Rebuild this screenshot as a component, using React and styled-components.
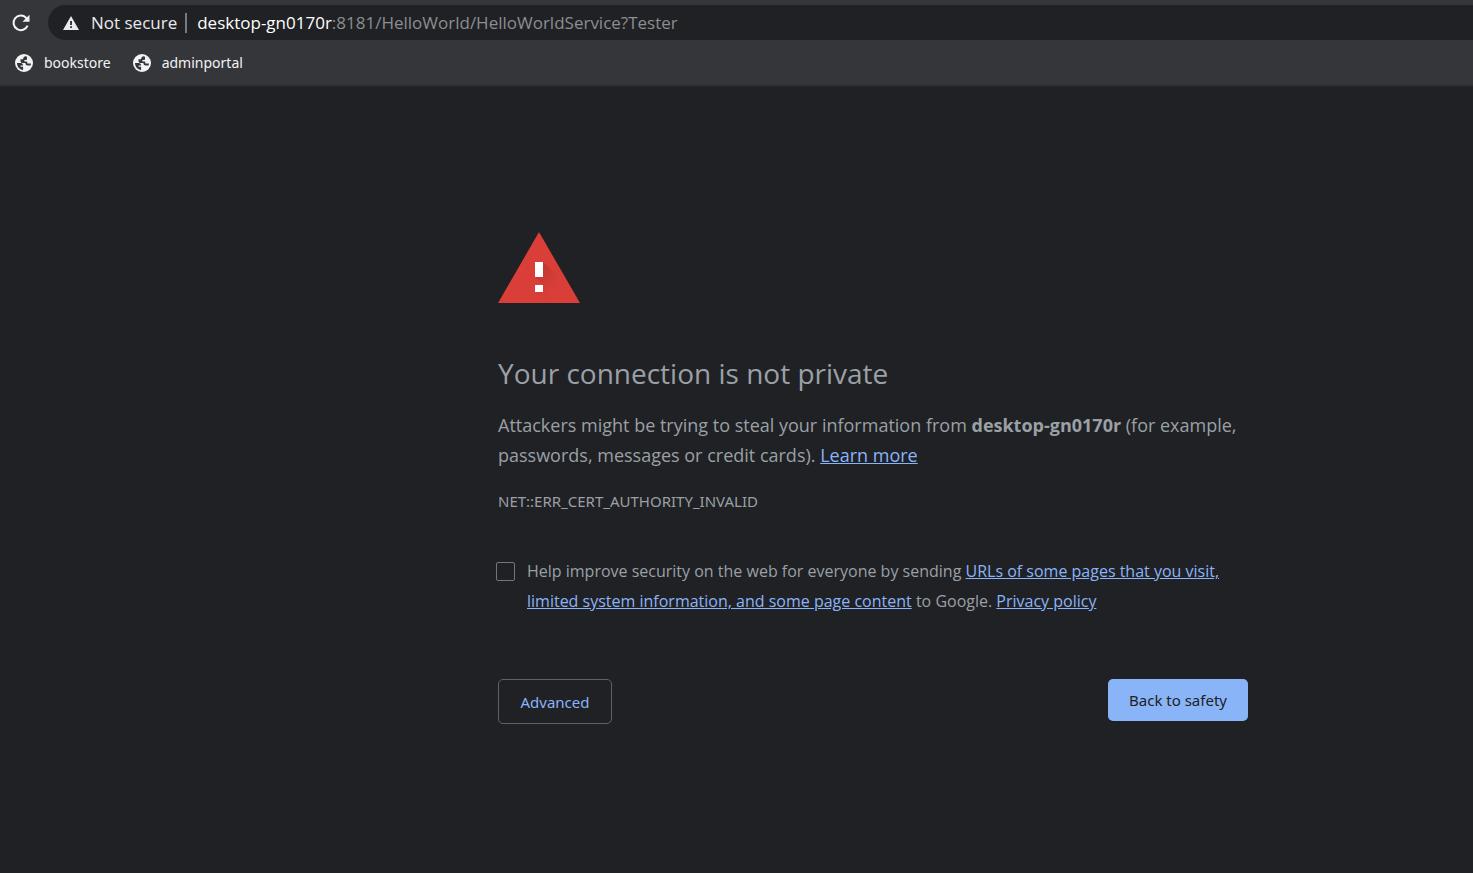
import React from "react";
import styled, { createGlobalStyle } from "styled-components";

const GlobalStyle = createGlobalStyle`
  * { box-sizing: border-box; }
  body {
    margin: 0;
    background: #202124;
    color: #9aa0a6;
    font-family: "Open Sans", sans-serif;
    font-size: 16px;
  }
`;

const Page = styled.div`
  min-height: 100vh;
  background: #202124;
`;

const BrowserBar = styled.header`
  padding-top: 5px;
  background: #35363a;
  border-bottom: 2px solid #292a2d;
`;

const Toolbar = styled.div`
  display: flex;
  align-items: center;
  height: 35px;
  padding-left: 11px;
`;

const ReloadButton = styled.button`
  display: flex;
  padding: 0;
  margin-right: 17px;
  border: 0;
  background: none;
  color: #f1f3f4;
`;

const AddressBar = styled.div`
  display: flex;
  flex: 1;
  align-items: center;
  height: 35px;
  padding-left: 15px;
  border-radius: 18px 0 0 18px;
  background: #202124;
  color: #e8eaed;
  font-size: 17px;
  line-height: 24px;
  white-space: nowrap;
`;

const SecurityLabel = styled.span`
  margin-left: 12px;
`;

const Divider = styled.span`
  width: 2px;
  height: 20px;
  margin: 0 10px 0 8px;
  background: #76797d;
`;

const Url = styled.span`
  color: #8b8e92;
`;

const UrlHost = styled.span`
  color: #ffffff;
`;

const BookmarkBar = styled.nav`
  display: flex;
  align-items: center;
  gap: 22px;
  height: 45px;
  padding-left: 15px;
`;

const Bookmark = styled.a`
  display: flex;
  align-items: center;
  gap: 11px;
  color: #f1f3f4;
  font-family: "Noto Sans", sans-serif;
  font-size: 14px;
  line-height: 20px;
  text-decoration: none;
`;

const Content = styled.main`
  padding: 145px 0 60px 273px;
`;

const Interstitial = styled.div`
  width: 100%;
  max-width: 750px;
  margin: 0 auto;
`;

const WarningIcon = styled.svg`
  display: block;
`;

const Title = styled.h1`
  margin: 49px 0 16px;
  font-size: 28px;
  font-weight: 400;
  line-height: 42px;
`;

const Message = styled.p`
  margin: 0;
  font-size: 18px;
  line-height: 30px;
`;

const ErrorCode = styled.p`
  margin: 16px 0 40px;
  font-family: "Noto Sans", sans-serif;
  font-size: 15px;
  line-height: 30px;
`;

const Link = styled.a`
  color: #8ab4f8;
  text-decoration: underline;
`;

const OptIn = styled.div`
  display: flex;
  align-items: flex-start;
  gap: 12px;
  margin-left: -2px;
`;

const Checkbox = styled.input`
  appearance: none;
  flex: none;
  width: 19px;
  height: 19px;
  margin: 6px 0 0;
  border: 1px solid #72767a;
  border-radius: 2px;
  background: transparent;
`;

const OptInLabel = styled.label`
  font-size: 16px;
  line-height: 30px;
`;

const Actions = styled.div`
  display: flex;
  align-items: flex-start;
  justify-content: space-between;
  margin-top: 63px;
`;

const Button = styled.button`
  min-width: ${(p) => (p.$primary ? "140px" : "114px")};
  padding: ${(p) => (p.$primary ? "11px 19px" : "12px 19px 11px")};
  border: ${(p) => (p.$primary ? "0" : "1px solid #5f6368")};
  border-radius: 5px;
  background: ${(p) => (p.$primary ? "#8ab4f8" : "transparent")};
  color: ${(p) => (p.$primary ? "#202124" : "#8ab4f8")};
  font-family: "Noto Sans", sans-serif;
  font-size: 15px;
  line-height: 20px;
`;

function GlobeIcon() {
  return (
    <svg width="18" height="18" viewBox="0 0 18 18" aria-hidden="true">
      <circle cx="9" cy="9" r="9" fill="#f1f3f4" />
      <path
        d="M2 9h3.600c1.700 0 2.500.9 2.500 2.500H5.600v1.200h2.500V16C4.500 15.600 2 12.700 2 9z"
        fill="#35363a"
      />
      <path
        d="M10.800 2.200C14 3 16 5.700 16 9c0 .9-.2 1.700-.4 2.400h-2.900c-1.500 0-2.300-.9-2.300-2.300H7.800C6.300 9.100 5.500 8.200 5.500 6.800V5.200h2.600c0-1.800.9-2.800 2.700-3z"
        fill="#35363a"
      />
      <path
        d="M12 2.600V5c0 .6-.4 1-1 1H9.400v1.400h1.900c.7 0 1 .4 1 1v1h3.900V7.300C15.800 5.200 14.200 3.200 12 2.600z"
        fill="#f1f3f4"
      />
    </svg>
  );
}

export default function App() {
  return (
    <Page>
      <GlobalStyle />
      <BrowserBar>
        <Toolbar>
          <ReloadButton type="button" aria-label="Reload">
            <svg width="20" height="20" viewBox="0 0 20 20" aria-hidden="true">
              <path
                d="M16.600 12.600A7.300 7.300 0 1 1 15 4.700L17 6.700"
                fill="none"
                stroke="currentColor"
                strokeWidth="2"
              />
              <path d="M18.500 1.800v7h-7z" fill="currentColor" />
            </svg>
          </ReloadButton>
          <AddressBar>
            <svg width="16" height="14" viewBox="0 0 16 14" aria-hidden="true">
              <path d="M8 0l8 14H0z" fill="#e8eaed" />
              <path d="M7.200 5h1.700v4H7.200zM7.200 10.200h1.700v1.700H7.200z" fill="#202124" />
            </svg>
            <SecurityLabel>Not secure</SecurityLabel>
            <Divider />
            <Url>
              <UrlHost>desktop-gn0170r</UrlHost>:8181/HelloWorld/HelloWorldService?Tester
            </Url>
          </AddressBar>
        </Toolbar>
        <BookmarkBar aria-label="Bookmarks">
          <Bookmark href="#bookstore">
            <GlobeIcon />
            bookstore
          </Bookmark>
          <Bookmark href="#adminportal">
            <GlobeIcon />
            adminportal
          </Bookmark>
        </BookmarkBar>
      </BrowserBar>
      <Content>
        <Interstitial>
          <WarningIcon width="82" height="71" viewBox="0 0 82 71" aria-hidden="true">
            <defs>
              <linearGradient id="shade" gradientUnits="userSpaceOnUse" x1="38" y1="36" x2="62" y2="60">
                <stop offset="0" stopColor="#b93430" />
                <stop offset="1" stopColor="#d93f38" stopOpacity="0" />
              </linearGradient>
            </defs>
            <path d="M41 0l41 71H0z" fill="#d93f38" />
            <path d="M45 30L74 57l8 14H49L37 60h8v-7l-8-8z" fill="url(#shade)" />
            <path d="M37 30h8v15h-8zM37 53h8v7h-8z" fill="#ffffff" />
          </WarningIcon>
          <Title>Your connection is not private</Title>
          <Message>
            Attackers might be trying to steal your information from <strong>desktop-gn0170r</strong> (for
            example, passwords, messages or credit cards). <Link href="#learn-more">Learn more</Link>
          </Message>
          <ErrorCode>NET::ERR_CERT_AUTHORITY_INVALID</ErrorCode>
          <OptIn>
            <Checkbox type="checkbox" id="opt-in" />
            <OptInLabel htmlFor="opt-in">
              Help improve security on the web for everyone by sending{" "}
              <Link href="#whitepaper">
                URLs of some pages that you visit, limited system information, and some page content
              </Link>{" "}
              to Google. <Link href="#privacy">Privacy policy</Link>
            </OptInLabel>
          </OptIn>
          <Actions>
            <Button type="button">Advanced</Button>
            <Button type="button" $primary>
              Back to safety
            </Button>
          </Actions>
        </Interstitial>
      </Content>
    </Page>
  );
}
